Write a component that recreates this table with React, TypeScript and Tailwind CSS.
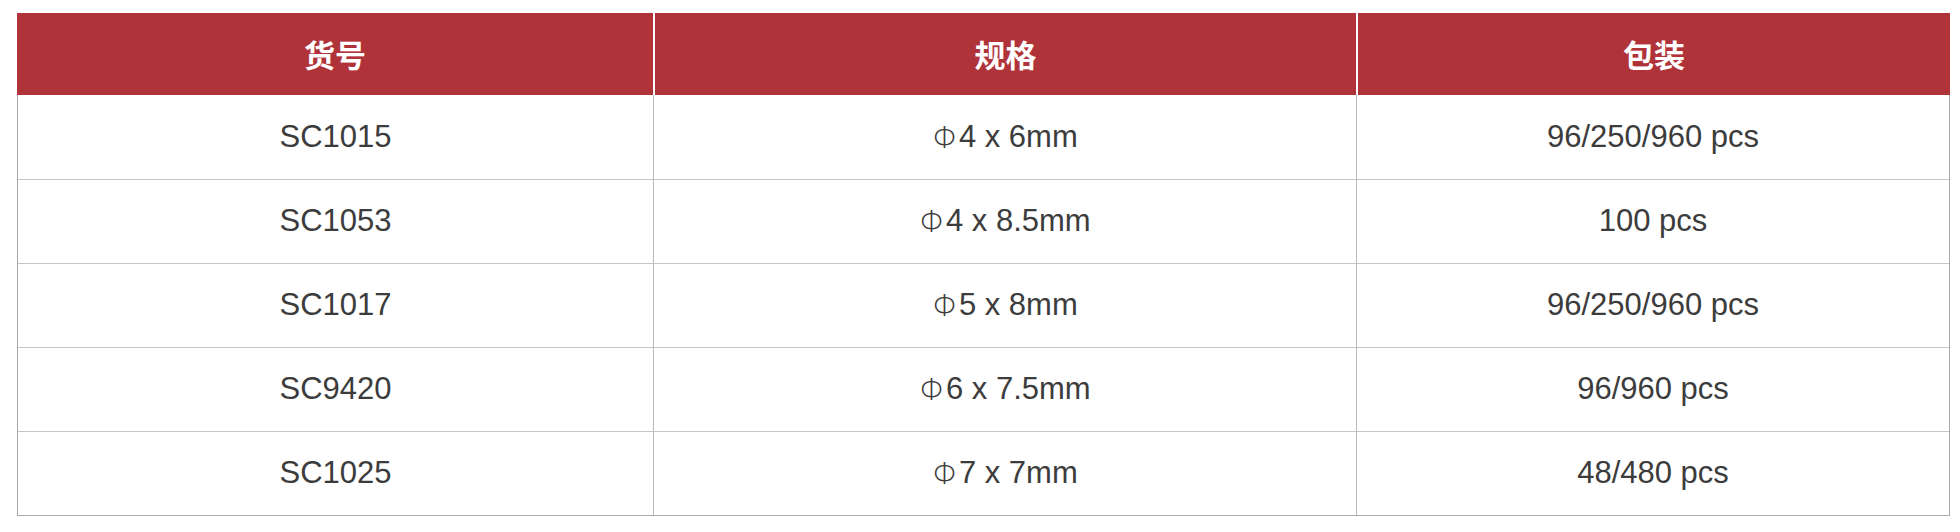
import React from "react";

const rows = [
  ["SC1015", "4 x 6mm", "96/250/960 pcs"],
  ["SC1053", "4 x 8.5mm", "100 pcs"],
  ["SC1017", "5 x 8mm", "96/250/960 pcs"],
  ["SC9420", "6 x 7.5mm", "96/960 pcs"],
  ["SC1025", "7 x 7mm", "48/480 pcs"],
];

const headers = ["货号", "规格", "包装"];

export default function App() {
  return (
    <div className="w-[1960px] h-[532px] bg-white pt-[13px] pl-[17px]">
      <div className="w-[1933px]" style={{ fontFamily: '"Liberation Sans", Arial, "Noto Sans CJK SC", sans-serif' }}>
        <div className="grid grid-cols-[636px_703px_594px] h-[82px] bg-[#b0333a]">
          {headers.map((h, i) => (
            <div
              key={h}
              className={`flex items-center justify-center text-white font-bold text-[31px] ${i > 0 ? "border-l-2 border-white" : ""}`}
              style={{ fontFamily: '"Noto Sans CJK SC", "Liberation Sans", sans-serif' }}
            >
              {h}
            </div>
          ))}
        </div>
        <div className="border-l border-r border-b border-[#a9a9a9]">
          {rows.map((r, ri) => (
            <div
              key={ri}
              className={`grid grid-cols-[635px_703px_593px] h-[84px] ${ri > 0 ? "border-t border-[#c4c4c4]" : ""}`}
            >
              {r.map((c, ci) => (
                <div
                  key={ci}
                  className={`flex items-center justify-center text-[31px] text-[#3c3c3c] ${ci > 0 ? "border-l border-[#b9b9b9]" : ""}`}
                >
                  {ci === 1 ? (
                    <>
                      <span
                        className="font-extralight"
                        style={{ fontFamily: '"DejaVu Sans", sans-serif' }}
                      >
                        Φ
                      </span>
                      {c}
                    </>
                  ) : (
                    c
                  )}
                </div>
              ))}
            </div>
          ))}
        </div>
      </div>
    </div>
  );
}
